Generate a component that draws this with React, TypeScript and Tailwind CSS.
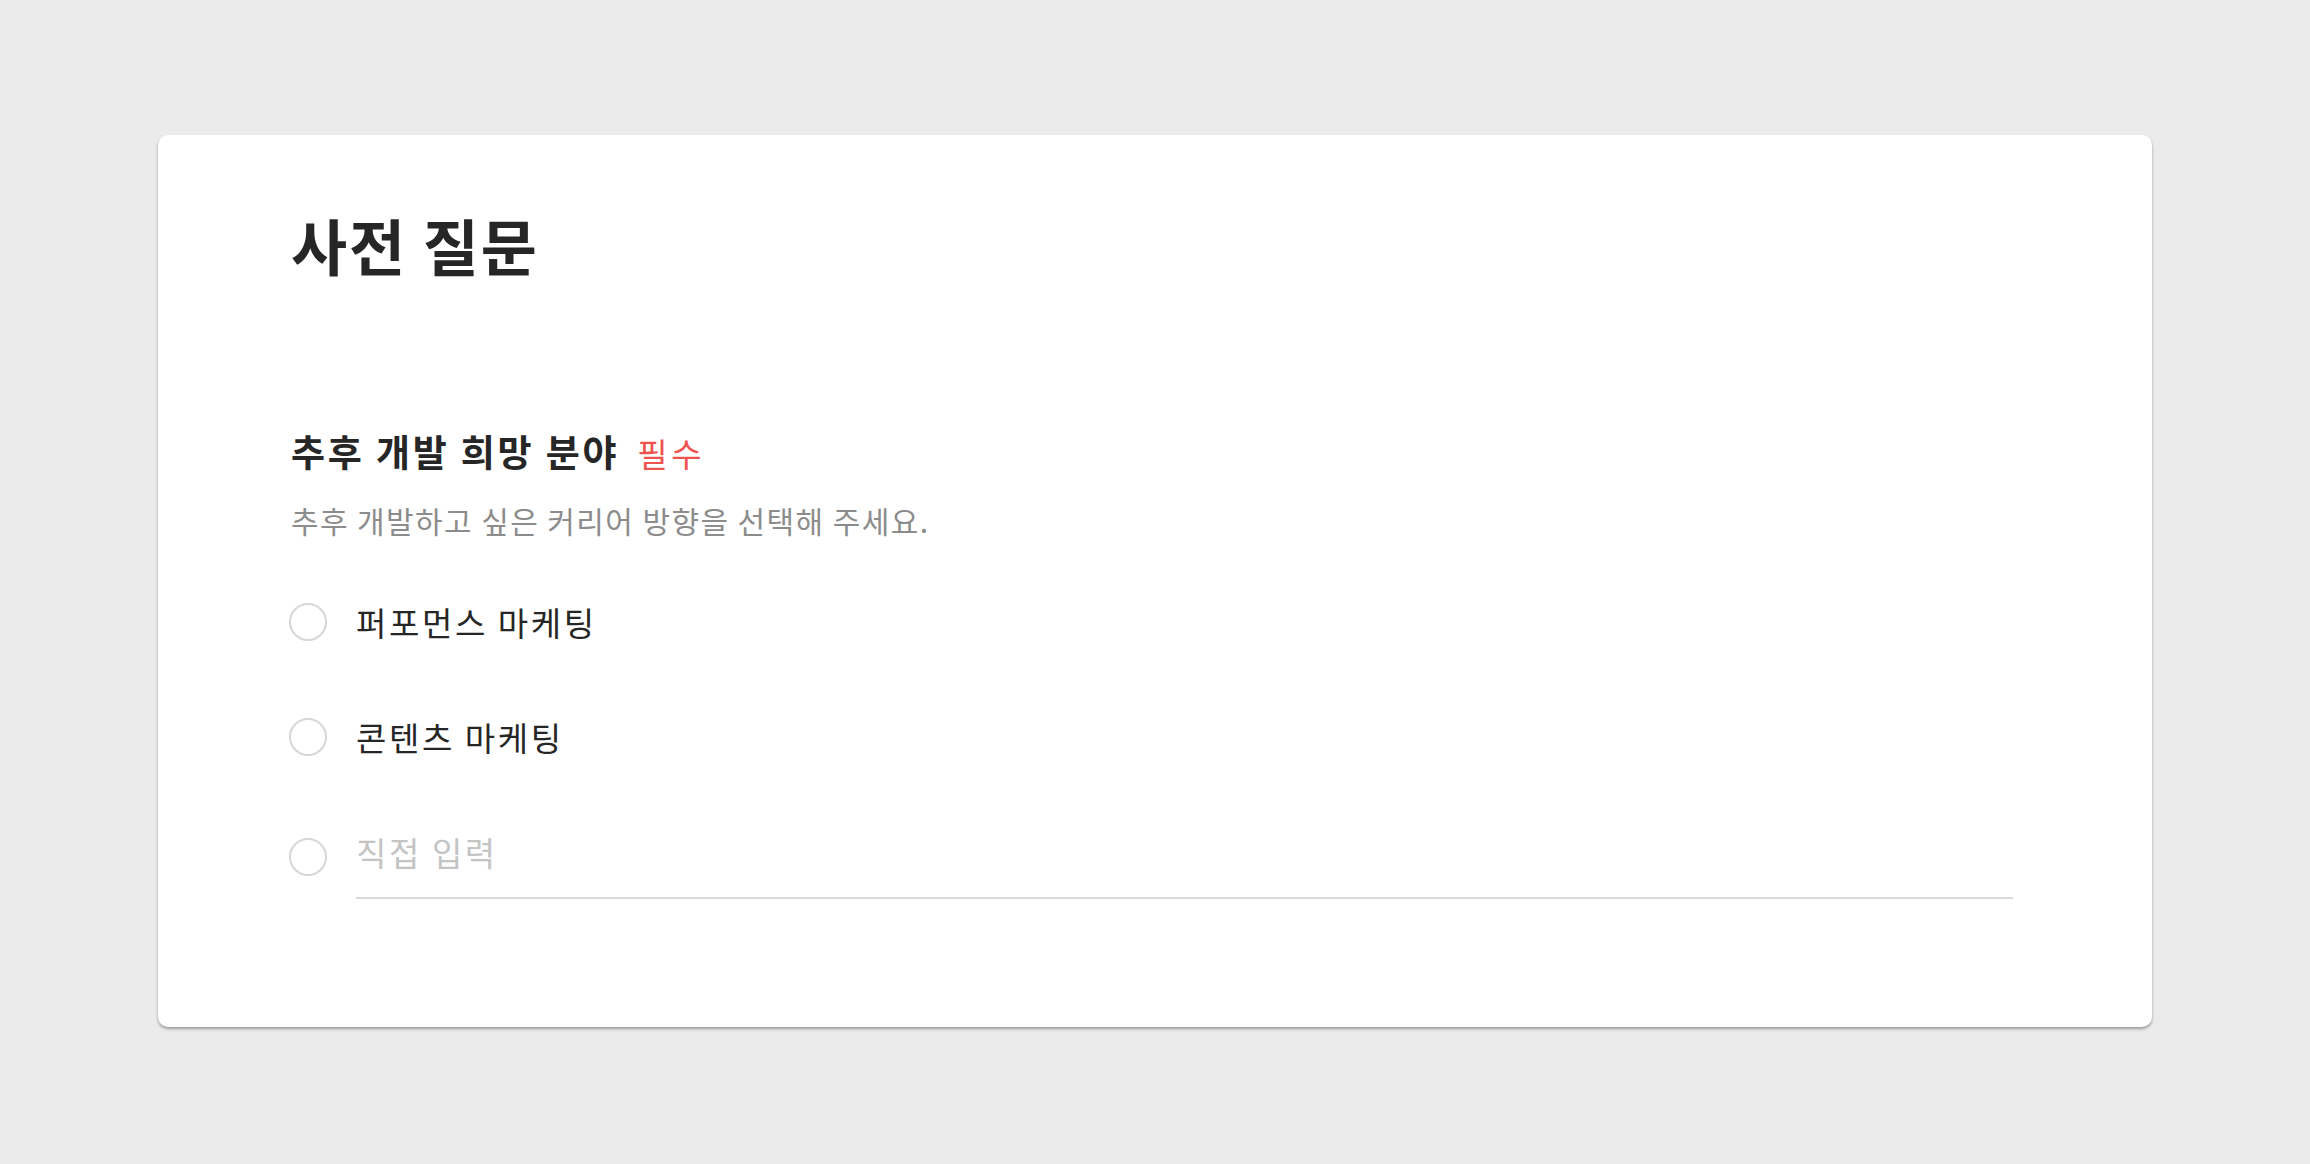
import React from "react";

const font = { fontFamily: '"Noto Sans CJK KR", "Noto Sans", sans-serif' };

function Radio() {
  return <div className="-ml-[2px] w-[38px] h-[38px] rounded-full border-2 border-[#d6d6d6] bg-white shrink-0" />;
}

export default function App() {
  return (
    <div className="w-[2310px] h-[1164px] bg-[#ebebeb] pt-[135px] pl-[158px]" style={font}>
      <div className="w-[1994px] h-[892px] bg-white rounded-[10px] shadow-[0_2px_3px_rgba(0,0,0,0.35)] pl-[133px] pr-[139px] pt-[79px]">
        <h1 className="text-[61px] leading-[61px] font-bold tracking-[1.9px] text-[#262626]">사전 질문</h1>
        <div className="mt-[158px] flex items-baseline">
          <span className="text-[37px] leading-[37px] font-bold tracking-[2.8px] text-[#262626]">추후 개발 희망 분야</span>
          <span className="ml-[18px] text-[33px] leading-[37px] tracking-[3.5px] text-[#ef5350]">필수</span>
        </div>
        <p className="mt-[33px] text-[30px] leading-[30px] tracking-[1.4px] text-[#8c8c8c]">추후 개발하고 싶은 커리어 방향을 선택해 주세요.</p>
        <div className="mt-[67px] flex items-center h-[40px] gap-[29px]">
          <Radio />
          <span className="text-[33px] leading-[40px] tracking-[2.6px] text-[#262626]">퍼포먼스 마케팅</span>
        </div>
        <div className="mt-[75px] flex items-center h-[40px] gap-[29px]">
          <Radio />
          <span className="text-[33px] leading-[40px] tracking-[2.6px] text-[#262626]">콘텐츠 마케팅</span>
        </div>
        <div className="mt-[75px] flex items-start gap-[29px]">
          <div className="mt-[6px]"><Radio /></div>
          <div className="flex-1 border-b-2 border-[#d9d9d9] pb-[25px]">
            <input
              className="w-full h-[40px] text-[33px] leading-[40px] tracking-[2.6px] bg-transparent outline-none text-[#262626] placeholder:text-[#c4c4c4]"
              style={font}
              placeholder="직접 입력"
            />
          </div>
        </div>
      </div>
    </div>
  );
}
